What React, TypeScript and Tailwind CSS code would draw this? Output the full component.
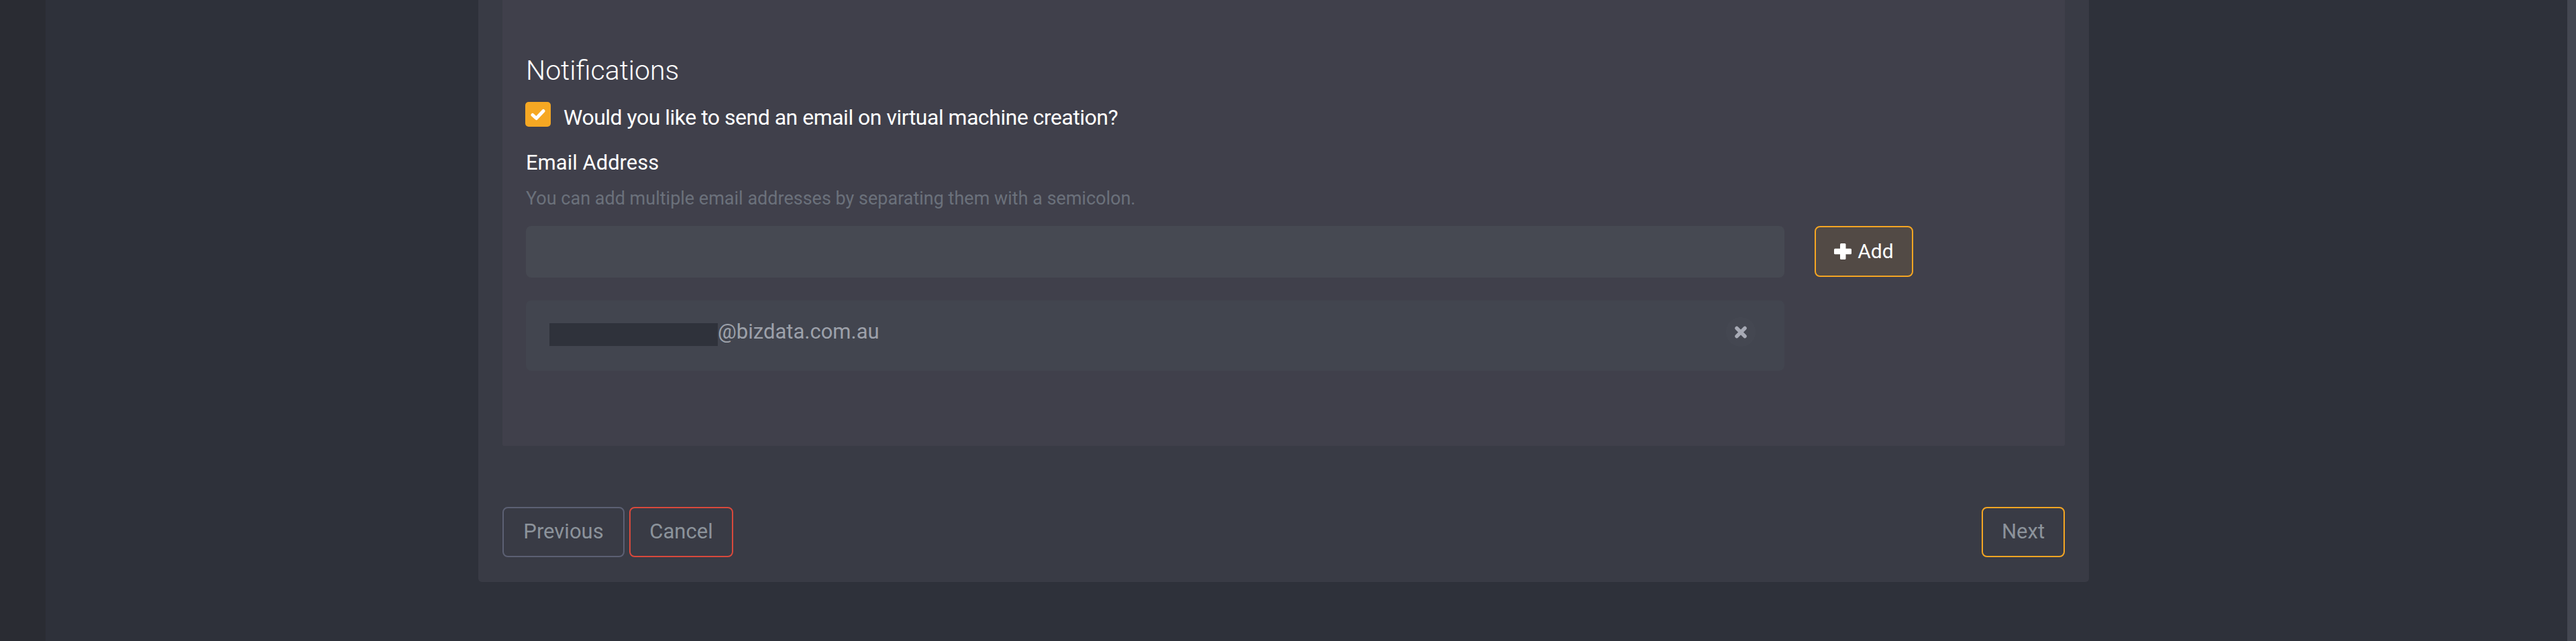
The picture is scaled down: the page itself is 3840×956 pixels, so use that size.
import { useState } from 'react';

function CheckIcon() {
  return (
    <svg width="22" height="18" viewBox="0 0 22 18" fill="none">
      <path
        d="M3 9.5 L8.5 14.5 L19 3.5"
        stroke="white"
        strokeWidth="5"
        strokeLinecap="round"
        strokeLinejoin="round"
      />
    </svg>
  );
}

function PlusIcon() {
  return (
    <svg width="26" height="24" viewBox="0 0 26 24" fill="white">
      <rect x="9" y="0" width="8.5" height="24" rx="1.5" />
      <rect x="0" y="7.75" width="26" height="8.5" rx="1.5" />
    </svg>
  );
}

function TimesIcon() {
  return (
    <svg width="20" height="19" viewBox="0 0 20 19" fill="none">
      <path
        d="M4 3.5 L16 15.5 M16 3.5 L4 15.5"
        stroke="#a7aab5"
        strokeWidth="5.5"
        strokeLinecap="round"
      />
    </svg>
  );
}

export default function App() {
  const [sendEmail, setSendEmail] = useState(true);
  const [email, setEmail] = useState('');

  return (
    <div className="flex min-h-[956px] w-full bg-[#2e313a] font-['Roboto',sans-serif]">
      <div className="w-[68px] shrink-0 bg-[#2a2c33]" />

      <div className="flex-1">
        <div className="ml-[645px] w-[2401px] rounded-b-[5px] bg-[#393b45] px-[36px] pb-[37px]">
          <div className="rounded-b-[2px] bg-[#40404b] px-[35px] pt-[80px] pb-[112px]">
            <h2 className="text-[41px] font-light leading-[50px] text-white">Notifications</h2>

            <label className="mt-[22px] flex cursor-pointer items-start">
              <span
                onClick={() => setSendEmail(!sendEmail)}
                className={`-ml-[1px] flex h-[37px] w-[38px] items-center justify-center rounded-[5px] ${
                  sendEmail ? 'bg-[#f6a823]' : 'border-2 border-[#6b717b]'
                }`}
              >
                {sendEmail && <CheckIcon />}
              </span>
              <span className="ml-[19px] mt-[3px] text-[32px] leading-[40px] tracking-[-0.5px] text-white">
                Would you like to send an email on virtual machine creation?
              </span>
            </label>

            <div className="mt-[30px] text-[31px] leading-[36px] text-white">Email Address</div>
            <p className="mt-[19px] text-[27px] leading-[32px] text-[#6b717b]">
              You can add multiple email addresses by separating them with a semicolon.
            </p>

            <div className="mt-[25px] flex items-start gap-[45px]">
              <input
                value={email}
                onChange={(e) => setEmail(e.target.value)}
                className="h-[77px] w-[1876px] rounded-[8px] bg-[#464952] px-[30px] text-[31px] text-white outline-none"
              />
              <button className="flex h-[76px] w-[147px] items-center justify-center gap-[9px] rounded-[8px] border-2 border-[#f5a623] bg-[#524a45] text-[30px] leading-none text-white">
                <PlusIcon />
                <span>Add</span>
              </button>
            </div>

            <div className="mt-[34px] flex h-[105px] w-[1876px] items-start rounded-[8px] bg-[#42454f] pl-[35px] pr-[43px]">
              <div className="mt-[34px] h-[34px] w-[251px] bg-[#2f323b]" />
              <span className="mt-[29px] text-[31px] leading-[36px] text-[#9da1aa]">@bizdata.com.au</span>
              <button className="ml-auto mt-[25px] flex h-[44px] w-[44px] items-center justify-center rounded-full bg-white/[0.015]">
                <TimesIcon />
              </button>
            </div>
          </div>

          <div className="mt-[91px] flex items-center justify-between">
            <div className="flex gap-[7px]">
              <button className="h-[75px] w-[182px] rounded-[8px] border-2 border-[#5c6073] text-[31px] text-[#8c939b]">
                Previous
              </button>
              <button className="h-[75px] w-[155px] rounded-[8px] border-2 border-[#d9493c] text-[31px] text-[#8c939b]">
                Cancel
              </button>
            </div>
            <button className="h-[75px] w-[124px] rounded-[8px] border-2 border-[#f5a623] text-[31px] text-[#8c939b]">
              Next
            </button>
          </div>
        </div>
      </div>

      <div className="w-[13px] shrink-0 bg-[#444751]" />
    </div>
  );
}
